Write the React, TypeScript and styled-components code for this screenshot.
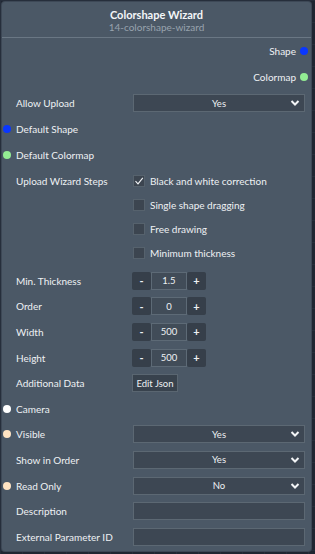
import React from 'react';
import styled, { createGlobalStyle } from 'styled-components';

const GlobalStyle = createGlobalStyle`
  html, body {
    margin: 0;
    padding: 0;
    background-color: #1f2632;
    font-family: Lato, 'Open Sans', sans-serif;
  }
`;

const Canvas = styled.div`
  width: 315px;
  height: 554px;
  padding: 2px 0 0 2px;
  box-sizing: border-box;
  background-color: #1f2632;
  background-image: linear-gradient(#262e3b 1px, transparent 1px),
    linear-gradient(90deg, #262e3b 1px, transparent 1px);
  background-size: 22px 22px;
`;

const Panel = styled.div`
  width: 309px;
  height: 549px;
  box-sizing: border-box;
  background: #4b5866;
  border-radius: 3px;
  box-shadow: 0 0 0 1px #3d4856;
  color: #eef1f4;
  font-size: 10px;
`;

const Header = styled.div`
  height: 36px;
  border-bottom: 1px solid #6a7784;
  display: flex;
  flex-direction: column;
  align-items: center;
  padding-top: 6px;
  box-sizing: border-box;
`;

const Title = styled.div`
  font-weight: 700;
  font-size: 11px;
  line-height: 13px;
  color: #f4f6f8;
`;

const Subtitle = styled.div`
  font-size: 10px;
  line-height: 12px;
  color: #98a3ae;
`;

const Body = styled.div`
  padding: 0 6px 0 14px;
`;

const Row = styled.div<{ $h?: number }>`
  height: ${(p) => p.$h ?? 25.6}px;
  display: grid;
  grid-template-columns: 117px 1fr;
  align-items: center;
`;

const OutputRow = styled.div`
  height: 26px;
  display: flex;
  justify-content: flex-end;
  align-items: center;
  gap: 4px;
  margin-right: -3px;
`;

const Dot = styled.span<{ $color: string }>`
  width: 8px;
  height: 8px;
  border-radius: 50%;
  background: ${(p) => p.$color};
  flex: none;
`;

const Label = styled.div<{ $dot?: boolean }>`
  display: flex;
  align-items: center;
  gap: 5px;
  margin-left: ${(p) => (p.$dot ? '-13px' : '0')};
  white-space: nowrap;
`;

const SelectBox = styled.div`
  height: 18px;
  box-sizing: border-box;
  background: #3d4753;
  border: 1px solid #5c6873;
  display: flex;
  align-items: center;
  justify-content: center;
  position: relative;
  font-size: 9.5px;
  svg {
    position: absolute;
    right: 4px;
    top: 4px;
  }
`;

const TextBox = styled.div`
  height: 18px;
  box-sizing: border-box;
  background: #3d4753;
  border: 1px solid #5c6873;
`;

const StepsRow = styled.div`
  display: grid;
  grid-template-columns: 117px 1fr;
  padding: 1px 0 3px;
`;

const StepsLabel = styled(Label)`
  height: 24px;
`;

const CheckList = styled.div`
  display: flex;
  flex-direction: column;
`;

const CheckItem = styled.div`
  height: 24px;
  display: flex;
  align-items: center;
  gap: 5px;
`;

const Box = styled.span`
  width: 12px;
  height: 12px;
  box-sizing: border-box;
  background: #3c4550;
  border: 1px solid #56626d;
  display: flex;
  align-items: center;
  justify-content: center;
`;

const Stepper = styled.div`
  display: flex;
  height: 18px;
  margin-left: -1px;
`;

const StepButton = styled.div`
  width: 19px;
  background: #363f4a;
  border-radius: 2px;
  display: flex;
  align-items: center;
  justify-content: center;
  font-weight: 700;
  font-size: 11px;
`;

const StepValue = styled.div`
  width: 36px;
  box-sizing: border-box;
  background: #414c58;
  border: 1px solid #5d6a76;
  display: flex;
  align-items: center;
  justify-content: center;
  font-size: 9.5px;
`;

const JsonButton = styled.div`
  width: 46px;
  height: 18px;
  margin-left: -1px;
  box-sizing: border-box;
  background: #38424d;
  border: 1px solid #5a6671;
  display: flex;
  align-items: center;
  justify-content: center;
  font-size: 9.5px;
`;

const Chevron = () => (
  <svg width="10" height="8" viewBox="0 0 10 8">
    <path d="M1.5 2 L5 5.5 L8.5 2" fill="none" stroke="#f2f4f6" strokeWidth="2" />
  </svg>
);

const Check = () => (
  <svg width="10" height="10" viewBox="0 0 10 10">
    <path d="M1.5 5.2 L4 7.8 L8.8 1.8" fill="none" stroke="#f2f4f6" strokeWidth="1.1" />
  </svg>
);

const Select: React.FC<{ value: string }> = ({ value }) => (
  <SelectBox>
    {value}
    <Chevron />
  </SelectBox>
);

const NumberStep: React.FC<{ value: string }> = ({ value }) => (
  <Stepper>
    <StepButton>-</StepButton>
    <StepValue>{value}</StepValue>
    <StepButton>+</StepButton>
  </Stepper>
);

const steps = [
  { label: 'Black and white correction', checked: true },
  { label: 'Single shape dragging', checked: false },
  { label: 'Free drawing', checked: false },
  { label: 'Minimum thickness', checked: false },
];

const App: React.FC = () => (
  <Canvas>
    <GlobalStyle />
    <Panel>
      <Header>
        <Title>Colorshape Wizard</Title>
        <Subtitle>14-colorshape-wizard</Subtitle>
      </Header>
      <Body>
        <OutputRow>
          Shape <Dot $color="#0a37ff" />
        </OutputRow>
        <OutputRow>
          Colormap <Dot $color="#93ec93" />
        </OutputRow>
        <Row $h={26}>
          <Label>Allow Upload</Label>
          <Select value="Yes" />
        </Row>
        <Row $h={26}>
          <Label $dot>
            <Dot $color="#0a37ff" />
            Default Shape
          </Label>
        </Row>
        <Row $h={26}>
          <Label $dot>
            <Dot $color="#93ec93" />
            Default Colormap
          </Label>
        </Row>
        <StepsRow>
          <StepsLabel>Upload Wizard Steps</StepsLabel>
          <CheckList>
            {steps.map((s) => (
              <CheckItem key={s.label}>
                <Box>{s.checked && <Check />}</Box>
                {s.label}
              </CheckItem>
            ))}
          </CheckList>
        </StepsRow>
        <Row>
          <Label>Min. Thickness</Label>
          <NumberStep value="1.5" />
        </Row>
        <Row>
          <Label>Order</Label>
          <NumberStep value="0" />
        </Row>
        <Row>
          <Label>Width</Label>
          <NumberStep value="500" />
        </Row>
        <Row>
          <Label>Height</Label>
          <NumberStep value="500" />
        </Row>
        <Row>
          <Label>Additional Data</Label>
          <JsonButton>Edit Json</JsonButton>
        </Row>
        <Row>
          <Label $dot>
            <Dot $color="#ffffff" />
            Camera
          </Label>
        </Row>
        <Row>
          <Label $dot>
            <Dot $color="#ffe3c2" />
            Visible
          </Label>
          <Select value="Yes" />
        </Row>
        <Row>
          <Label>Show in Order</Label>
          <Select value="Yes" />
        </Row>
        <Row>
          <Label $dot>
            <Dot $color="#ffe3c2" />
            Read Only
          </Label>
          <Select value="No" />
        </Row>
        <Row>
          <Label>Description</Label>
          <TextBox />
        </Row>
        <Row>
          <Label>External Parameter ID</Label>
          <TextBox />
        </Row>
      </Body>
    </Panel>
  </Canvas>
);

export default App;
